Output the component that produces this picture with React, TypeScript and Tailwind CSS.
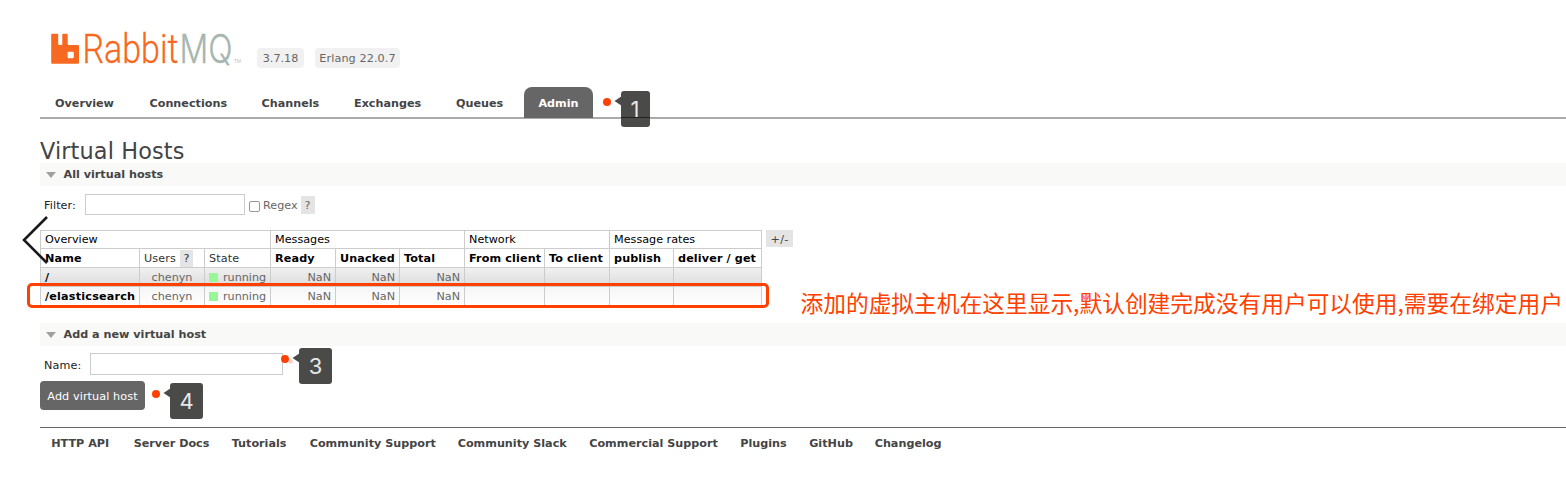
import React from "react";

const tabs = ["Overview", "Connections", "Channels", "Exchanges", "Queues"];
const tabWidths = ["w-[94.5px]", "w-[112px]", "w-[92.5px]", "w-[102px]", "w-[68px]"];
const links = ["HTTP API", "Server Docs", "Tutorials", "Community Support", "Community Slack", "Commercial Support", "Plugins", "GitHub", "Changelog"];
const linkWidths = ["w-[82.5px]", "w-[98px]", "w-[78px]", "w-[148px]", "w-[131.5px]", "w-[151px]", "w-[69px]", "w-[65.5px]", "w-[80px]"];

function Logo() {
  return (
    <svg width="192" height="36" viewBox="0 0 192 36" className="block overflow-visible">
      <path fill="#f76820" d="M1.2 1.7h5q1 0 1 1v9.3q0 1 1 1h2.1q1 0 1-1V2.7q0-1 1-1h3.4q1 0 1 1v9.3q0 1 1 1H27q1 0 1 1v16.7q0 1-1 1H1.2q-1 0-1-1V2.7q0-1 1-1zM17.8 19.8q-1.2 0-1.2 1.2v4q0 1.2 1.2 1.2h3.8q1.2 0 1.2-1.2v-4q0-1.2-1.2-1.2z" />
      <text x="31.5" y="30.8" fontFamily="Roboto, sans-serif" fontWeight="300" fontSize="40.5" fill="#f76820" stroke="#f76820" strokeWidth="0.3" textLength="96" lengthAdjust="spacingAndGlyphs">Rabbit</text>
      <text x="128.5" y="30.8" fontFamily="Inter, sans-serif" fontWeight="300" fontSize="39.5" fill="#a7b6af" stroke="#a7b6af" strokeWidth="0.3" textLength="53" lengthAdjust="spacingAndGlyphs">MQ</text>
      <text x="183" y="31" fontFamily="Open Sans, sans-serif" fontSize="6" fill="#bbb" textLength="7" lengthAdjust="spacingAndGlyphs">TM</text>
    </svg>
  );
}

function Marker({ n, className, box, lined = false }: { n: string; className: string; box: string; lined?: boolean }) {
  return (
    <div className={`absolute h-[36px] w-[50px] ${className}`}>
      <div className="absolute left-0 top-[6.5px] h-[8px] w-[8px] rounded-full bg-[#ff4000]" />
      <svg className="absolute left-[11px] top-[5px]" width="8" height="10" viewBox="0 0 8 10"><path d="M0.5 5L8 0V10Z" fill="#4a4a48" /></svg>
      <div className={`absolute left-[18px] top-0 flex h-[35.5px] items-center justify-center rounded-[3px] bg-[#4a4a48] font-['Inter'] text-[22px] text-[#e8e8e8] ${box}`}>
        <span className="relative">{n}</span>
        {lined && <div className="absolute left-0 top-[26px] h-px w-full bg-[#222]" />}
      </div>
    </div>
  );
}

function Section({ title }: { title: string }) {
  return (
    <div className="flex h-[23px] items-center bg-[#f9f9f8] pl-[6px]">
      <svg width="10" height="6" viewBox="0 0 10 6"><path d="M0 0H10L5 6Z" fill="#a0a0a0" /></svg>
      <h2 className="pl-[7.5px] pt-px font-bold text-[#444]">{title}</h2>
    </div>
  );
}

function VhostRow({ name, className }: { name: string; className: string }) {
  const cell = "border border-[#ccc] px-[4px] text-right";
  return (
    <tr className={`h-[19px] ${className}`}>
      <td className="border border-[#ccc] px-[4px] font-bold tracking-[0.2px] text-black">{name}</td>
      <td className="border border-[#ccc] text-center">chenyn</td>
      <td className="border border-[#ccc] pl-[4px]">
        <div className="flex items-center gap-[5px]"><i className="h-[9px] w-[9px] bg-[#98f898]" />running</div>
      </td>
      <td className={cell}>NaN</td><td className={cell}>NaN</td><td className={cell}>NaN</td>
      <td className={cell} /><td className={cell} /><td className={cell} /><td className={cell} />
    </tr>
  );
}

export default function App() {
  const th = "border border-[#ccc] pl-[4px] text-left text-black";
  return (
    <div className="relative h-[482px] w-[1566px] overflow-hidden whitespace-nowrap bg-white font-['DejaVu_Sans',sans-serif] text-[11.2px] leading-[14px] text-[#666]">
      <div className="pl-[40px]">
        <header className="flex h-[87px] pl-[11px] pt-[32px]">
          <Logo />
          <div className="mt-[16px] flex h-[20px] gap-[11px]">
            <span className="ml-[14px] flex w-[47px] items-center justify-center rounded-[4px] bg-[#f0f1f0] pt-[2px]">3.7.18</span>
            <span className="flex w-[85px] items-center justify-center rounded-[4px] bg-[#f0f1f0] pt-[2px] tracking-[0.1px]">Erlang 22.0.7</span>
          </div>
        </header>
        <nav className="flex h-[32px] border-b-2 border-[#aaa] pl-[15px] font-bold text-[#444]">
          {tabs.map((t, i) => <a key={t} className={`pt-[10px] ${tabWidths[i]}`}>{t}</a>)}
          <a className="flex h-[31px] w-[69px] justify-center rounded-t-[8px] bg-[#666] pt-[10px] text-white">Admin</a>
        </nav>
        <h1 className="h-[44px] pt-[18px] text-[22.4px] leading-[28px] tracking-[0.12px] text-[#444]">Virtual Hosts</h1>
        <Section title="All virtual hosts" />
        <div className="mt-[8px] flex h-[21px] items-center pl-[4px]">
          <label className="w-[41px] pt-[2px] tracking-[0.1px] text-[#222]">Filter:</label>
          <div className="h-[21px] w-[160px] border border-[#ccc]" />
          <div className="ml-[4px] mt-[3px] h-[11px] w-[11px] rounded-[2px] border border-[#999]" />
          <span className="ml-[3px] pt-[2px]">Regex</span>
          <span className="ml-[3px] flex h-[18px] w-[14px] items-center justify-center bg-[#e4e4e4] pt-[2px]">?</span>
        </div>
        <div className="mt-[15px] flex h-[76px]">
          <table className="w-[722px] table-fixed border-collapse leading-[15px]">
            <colgroup>
              <col className="w-[99px]" /><col className="w-[65px]" /><col className="w-[66px]" /><col className="w-[65px]" /><col className="w-[64px]" />
              <col className="w-[65px]" /><col className="w-[80px]" /><col className="w-[65px]" /><col className="w-[64px]" /><col className="w-[88px]" />
            </colgroup>
            <tbody>
              <tr className="h-[18px]">
                <td colSpan={3} className={th}>Overview</td><td colSpan={3} className={th}>Messages</td>
                <td colSpan={2} className={th}>Network</td><td colSpan={2} className={th}>Message rates</td>
              </tr>
              <tr className="h-[19px] font-bold tracking-[0.12px]">
                <td className={th}>Name</td>
                <td className="border border-[#ccc] pl-[4px] font-normal text-[#333]">
                  <div className="flex h-[17px] items-center gap-[4px]"><span>Users</span><span className="flex h-[17px] w-[13px] items-center justify-center bg-[#e4e4e4]">?</span></div>
                </td>
                <td className="border border-[#ccc] pl-[4px] font-normal text-[#333]">State</td>
                <td className={th}>Ready</td><td className={th}>Unacked</td><td className={th}>Total</td>
                <td className={th}>From client</td><td className={th}>To client</td><td className={th}>publish</td><td className={th}>deliver / get</td>
              </tr>
              <VhostRow name="/" className="bg-linear-to-b from-[#f0f0f0] to-[#dcdcdc]" />
              <VhostRow name="/elasticsearch" className="bg-linear-to-b from-[#f6f6f6] to-white" />
            </tbody>
          </table>
          <div className="ml-[4px] flex h-[17px] w-[27px] items-center justify-center bg-[#e4e4e4] pt-[2px] tracking-[0.3px] text-[#444]">+/-</div>
        </div>
        <div className="h-[17px]" />
        <Section title="Add a new virtual host" />
        <div className="flex h-[35px] items-center pl-[4px] pt-[1px]">
          <label className="w-[46px] pt-[3px] tracking-[0.1px] text-[#222]">Name:</label>
          <div className="h-[22px] w-[193px] border border-[#ccc]" />
          <span className="ml-[5px] text-[#ffb0b0]">*</span>
        </div>
        <button className="block h-[29px] w-[105px] rounded-[4px] bg-[#666] pt-[2px] tracking-[0.1px] text-white">Add virtual host</button>
        <footer className="mt-[17px] flex border-t border-[#666] pl-[11.2px] pt-[9px] font-bold text-[#444]">
          {links.map((t, i) => <a key={t} className={linkWidths[i]}>{t}</a>)}
        </footer>
      </div>
      <svg className="absolute left-[20px] top-[214px]" width="30" height="52" viewBox="0 0 30 52"><path d="M27 3L4 26L27 49" fill="none" stroke="#1a1a1a" strokeWidth="2.6" /></svg>
      <div className="absolute left-[27px] top-[283px] h-[25px] w-[742px] rounded-[5px] border-[3px] border-[#ff4000]" />
      <p className="absolute left-[800.5px] top-[287px] font-['Noto_Sans_CJK_SC',sans-serif] text-[22.72px] leading-[32px] text-[#ff4000]">添加的虚拟主机在这里显示,默认创建完成没有用户可以使用,需要在绑定用户</p>
      <Marker n="1" className="left-[602.5px] top-[91px]" box="w-[29px]" lined />
      <Marker n="3" className="left-[281px] top-[348px]" box="w-[33px]" />
      <Marker n="4" className="left-[152px] top-[383px]" box="w-[33px]" />
    </div>
  );
}
